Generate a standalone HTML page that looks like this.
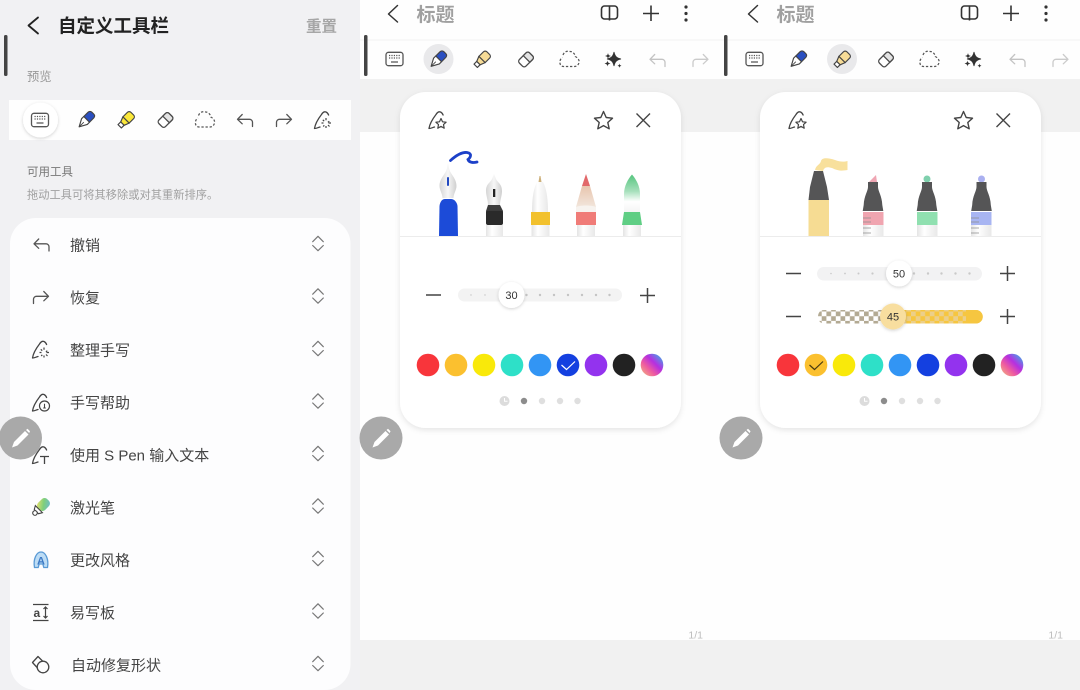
<!DOCTYPE html>
<html lang="zh"><head><meta charset="utf-8"><title>自定义工具栏</title>
<style>
html,body{margin:0;padding:0;background:#fff}
svg{display:block;font-family:"Liberation Sans","Noto Sans CJK SC",sans-serif;filter:blur(.3px)}
</style></head><body>
<svg width="1080" height="690" viewBox="0 0 1080 690" xmlns="http://www.w3.org/2000/svg">
<defs>
<filter id="sh" x="-20%" y="-20%" width="140%" height="140%"><feDropShadow dx="0" dy="2" stdDeviation="3" flood-color="#000" flood-opacity=".1"/></filter>
<filter id="sh2" x="-40%" y="-40%" width="180%" height="180%"><feDropShadow dx="0" dy="1" stdDeviation="1.5" flood-color="#000" flood-opacity=".18"/></filter>
<filter id="b"><feGaussianBlur stdDeviation=".35"/></filter>
<linearGradient id="silver" x1="0" y1="0" x2="1" y2="0"><stop offset="0" stop-color="#d5d5d5"/><stop offset=".5" stop-color="#f7f7f7"/><stop offset="1" stop-color="#cfcfcf"/></linearGradient>
<linearGradient id="whitebar" x1="0" y1="0" x2="1" y2="0"><stop offset="0" stop-color="#e4e4e4"/><stop offset=".35" stop-color="#fff"/><stop offset="1" stop-color="#e8e8e8"/></linearGradient>
<linearGradient id="greenf" x1="0" y1="0" x2="0" y2="1"><stop offset="0" stop-color="#55c57e"/><stop offset=".45" stop-color="#a7e0bc"/><stop offset=".72" stop-color="#fff"/><stop offset="1" stop-color="#f4f4f4"/></linearGradient>
<linearGradient id="wood" x1="0" y1="0" x2="0" y2="1"><stop offset="0" stop-color="#e8c5ae"/><stop offset="1" stop-color="#f2e6dc"/></linearGradient>
<linearGradient id="laser" x1="0" y1="1" x2="1" y2="0"><stop offset="0" stop-color="#f3e36a"/><stop offset=".5" stop-color="#7fcf7a"/><stop offset="1" stop-color="#6cb8d8"/></linearGradient>
<linearGradient id="rainbow2" x1="0" y1="1" x2="1" y2="0"><stop offset="0" stop-color="#f3c17a"/><stop offset=".35" stop-color="#ee5aa0"/><stop offset=".6" stop-color="#b62fe0"/><stop offset=".85" stop-color="#5a8fe6"/><stop offset="1" stop-color="#3fd6c8"/></linearGradient>
<pattern id="chk" width="9.4" height="9.4" patternUnits="userSpaceOnUse" x="817" y="311.5"><rect width="9.4" height="9.4" fill="#fff"/><rect width="4.7" height="4.7" fill="#b3aa93"/><rect x="4.7" y="4.7" width="4.7" height="4.7" fill="#b3aa93"/></pattern>
<pattern id="chk2" width="9.4" height="9.4" patternUnits="userSpaceOnUse" x="817" y="311.5"><rect width="9.4" height="9.4" fill="#f6c640"/><rect width="4.7" height="4.7" fill="#eccf8a"/><rect x="4.7" y="4.7" width="4.7" height="4.7" fill="#eccf8a"/></pattern>

<g id="kb" fill="none" stroke="#555" stroke-width="1.3"><rect x="-8.5" y="-6.7" width="17" height="13.4" rx="2.5"/><path d="M-5.5-3.5h1.2m1.2 0h1.2m1.2 0h1.2m1.2 0h1.2m1.2 0h1.2M-5.5-1h1.2m1.2 0h1.2m1.2 0h1.2m1.2 0h1.2m1.2 0h1.2M-3.5 3h7" stroke-width="1.2"/></g>
<g id="penc"><g transform="rotate(45) scale(.88)" stroke="#444" stroke-width="1.3" stroke-linejoin="round"><path d="M-4.6-1V-8a3 3 0 0 1 3-3H1.6a3 3 0 0 1 3 3V-1Z" fill="#2a4fc0"/><path d="M-4.6-1V2.5L0 11 4.6 2.5V-1Z" fill="#fff"/><path d="M0 3.5V11" stroke-width="1"/></g></g>
<g id="penh"><g transform="rotate(45) scale(.85)" stroke="#444" stroke-width="1.4" stroke-linejoin="round"><path d="M-5.2 0V-7.5a3 3 0 0 1 3-3H2.2a3 3 0 0 1 3 3V0Z" fill="#fbe83a"/><path d="M-5.2 0-2.8 6H2.8L5.2 0Z" fill="#fbe83a"/><path d="M-2.8 6V10.5H2.800V6Z" fill="#fff"/></g></g>
<g id="penh2"><g transform="rotate(45) scale(.85)" stroke="#444" stroke-width="1.4" stroke-linejoin="round"><path d="M-5.2 0V-7.5a3 3 0 0 1 3-3H2.2a3 3 0 0 1 3 3V0Z" fill="#f7dc97"/><path d="M-5.2 0-2.8 6H2.8L5.2 0Z" fill="#f7dc97"/><path d="M-2.8 6V10.5H2.800V6Z" fill="#fff"/></g></g>
<g id="eraser"><g transform="rotate(45) scale(.8)" stroke="#4a4a4a" stroke-width="1.6"><rect x="-5.8" y="-9" width="11.6" height="18" rx="3.2" fill="#fff"/><path d="M-5.8-1V-5.8a3.2 3.2 0 0 1 3.2-3.2H2.6a3.2 3.2 0 0 1 3.2 3.2V-1Z" fill="#e3e3e3"/></g></g>
<path id="lasso" d="M-6.500-4.500C-5-8.500-1.500-8.500 0-8 3-8.500 5.500-5.500 5.800-3 8.500-1.500 10 .5 9.500 3 9 5.500 7 7 5 7H-6C-9 7-10 4-9.500 1.500-9 -.5-8-1.500-7-2" fill="none" stroke="#555" stroke-width="1.250" stroke-dasharray="2.300 1.800"/>
<path id="undo" d="M7.500 6.500V2.300A3 3 0 0 0 4.500-.7H-7M-2.800-5.500-7.500-.7-2.800 3.800" fill="none" stroke="#555" stroke-width="1.300" stroke-linecap="round" stroke-linejoin="round"/>
<path id="redo" d="M-7.500 6.500V2.300A3 3 0 0 1-4.500-.7H7M2.800-5.500 7.500-.7 2.800 3.800" fill="none" stroke="#555" stroke-width="1.300" stroke-linecap="round" stroke-linejoin="round"/>
<path id="penout" d="M-8.500 8.500C-8 5-6.500 1-1.500-5.500-.3-7.500 1.500-8.500 3-8 4-7.600 5-6.500 5.600-5M-8.500 8.500C-6.500 8.500-5 7.500-3 7" fill="none" stroke="#444" stroke-width="1.300" stroke-linecap="round"/>
<g id="tidy"><use href="#penout"/><path d="M3-2V.2M3 6V8M-1.500 3H.5M5.500 3H8M-.2-.2 1.200 1.200M6.300 1.200 4.900 2.300M.2 6.500 1.300 5.300M5 5 6.500 6.500" stroke="#444" stroke-width="1.200" fill="none"/></g>
<g id="help"><use href="#penout"/><circle cx="3.500" cy="3.500" r="5" fill="#fff" stroke="#444" stroke-width="1.200"/><path d="M3.500 1.200V5.500M2.200 5.500H4.800" stroke="#444" stroke-width="1.100" fill="none"/></g>
<g id="spen"><use href="#penout"/><path d="M-1 1.500H8M3.500 1.500V9" stroke="#444" stroke-width="1.300" fill="none"/></g>
<g id="pstar"><use href="#penout"/><path d="M3.500-1.500 5 1.800 8.600 2.200 6 4.600 6.700 8.200 3.500 6.400 .3 8.200 1 4.600-1.600 2.200 2 1.800Z" fill="#fff" stroke="#444" stroke-width="1.200" stroke-linejoin="round"/></g>
<g id="chev" fill="none" stroke="#777" stroke-width="1.200" stroke-linecap="round" stroke-linejoin="round"><path d="M-5.300-1.800 0-7.200 5.300-1.800M-5.300 2 0 7.200 5.300 2"/></g>
<g id="fab"><circle r="21.500" fill="#a9a9a9"/><path d="M-8.500 9.500-6.500 4 4.500-7 8-3.500-3 7.500Z" fill="#fff"/><path d="M5.500-8 7-9.300 9.500-6.800 8.700-5Z" fill="#fff"/></g>
<g id="spark" fill="#333"><path d="M1-7.500C2-3 3.500-1.500 8-.5 3.500.5 2 2 1 6.500 0 2-1.500.5-6-.5-1.500-1.500 0-3 1-7.500Z" stroke="#333" stroke-width=".8"/><path d="M-5-6.500C-4.600-4.500-4.200-4.100-2-3.500-4.200-2.900-4.600-2.500-5-.5-5.400-2.500-5.800-2.900-8-3.500-5.800-4.100-5.400-4.500-5-6.500Z"/><path d="M-5.500 1C-5.100 3-4.700 3.400-2.500 4-4.700 4.600-5.100 5-5.500 7-5.900 5-6.300 4.600-8.500 4-6.300 3.400-5.900 3-5.500 1Z"/><path d="M6.500 4C6.800 5.500 7 5.700 8.500 6.200 7 6.700 6.800 7 6.500 8.500 6.200 7 6 6.700 4.500 6.200 6 5.700 6.200 5.500 6.500 4Z"/></g>
<g id="palette"><circle cx="428" cy="365" r="11.300" fill="#f8353b"/><circle cx="456" cy="365" r="11.300" fill="#fbc02f"/><circle cx="484" cy="365" r="11.300" fill="#f9e90a"/><circle cx="512" cy="365" r="11.300" fill="#2ee0c8"/><circle cx="540" cy="365" r="11.300" fill="#3295f4"/><circle cx="568" cy="365" r="11.300" fill="#1440e0"/><circle cx="596" cy="365" r="11.300" fill="#9333ee"/><circle cx="624" cy="365" r="11.300" fill="#222"/><circle cx="652" cy="365" r="11.300" fill="url(#rainbow2)"/></g>
<g id="pager"><circle cx="504.500" cy="401" r="5" fill="#dcdcdc"/><path d="M504.500 398V401.300H507.500" stroke="#fff" stroke-width="1" fill="none"/><circle cx="524" cy="401" r="3.200" fill="#8c8c8c"/><circle cx="542" cy="401" r="3.200" fill="#dfdfdf"/><circle cx="560" cy="401" r="3.200" fill="#dfdfdf"/><circle cx="577.500" cy="401" r="3.200" fill="#dfdfdf"/></g>
<g id="cap"><path d="M-5-29H5V-24C5-20 9-15 9.300-6L10.300 0H-10.300L-9.300-6C-9-15-5-20-5-24Z" fill="#545456"/></g>
</defs>

<!-- LEFT PANEL -->
<rect width="360" height="690" fill="#f1f1f3"/>
<path d="M38 17.500 28.500 25.500 38 33.500" fill="none" stroke="#222" stroke-width="1.800" stroke-linecap="round" stroke-linejoin="round"/>
<text x="58" y="32.500" font-size="18.500" font-weight="700" fill="#222">自定义工具栏</text>
<text x="306" y="31.500" font-size="15.500" font-weight="700" fill="#a6a6a6">重置</text>
<rect x="4" y="35" width="3.500" height="41" rx="1.500" fill="#444"/>
<text x="27" y="81" font-size="12.300" fill="#999">预览</text>
<rect x="9" y="100" width="342" height="40" fill="#fefefe"/>
<circle cx="40.500" cy="120" r="17.500" fill="#fff" filter="url(#sh2)"/>
<use href="#kb" x="40" y="120"/><use href="#penc" x="86" y="120"/><use href="#penh" x="126" y="120"/><use href="#eraser" x="165.500" y="120"/><use href="#lasso" x="205" y="120"/><use href="#undo" x="245" y="120"/><use href="#redo" x="284" y="120"/><use href="#tidy" x="323" y="120"/>
<text x="27" y="175.500" font-size="11.500" fill="#777">可用工具</text>
<text x="27" y="198.500" font-size="11.250" fill="#a0a0a0">拖动工具可将其移除或对其重新排序。</text>
<rect x="10" y="218" width="340.500" height="472" rx="26" fill="#fdfdfe"/>
<g font-size="15" fill="#444">
<text x="70" y="250.500">撤销</text><text x="70" y="303">恢复</text><text x="70" y="355.500">整理手写</text><text x="70" y="408">手写帮助</text><text x="70" y="460.500">使用 S Pen 输入文本</text><text x="70" y="513">激光笔</text><text x="70" y="565.500">更改风格</text><text x="70" y="618">易写板</text><text x="71" y="670.500">自动修复形状</text>
</g>
<use href="#chev" x="318" y="243.500"/><use href="#chev" x="318" y="296"/><use href="#chev" x="318" y="348.500"/><use href="#chev" x="318" y="401"/><use href="#chev" x="318" y="453.500"/><use href="#chev" x="318" y="506"/><use href="#chev" x="318" y="558.500"/><use href="#chev" x="318" y="611"/><use href="#chev" x="318" y="663.500"/>
<use href="#undo" x="41.500" y="244.500"/><use href="#redo" x="41" y="297"/><use href="#tidy" x="41" y="349.500"/><use href="#help" x="41" y="402.500"/><use href="#spen" x="41" y="455"/>
<g transform="translate(41,507) rotate(45)" stroke="#444" stroke-width="1.100"><rect x="-5" y="-10" width="10" height="13" rx="4" fill="url(#laser)" stroke="none"/><path d="M-5 3-3 6.500H3L5 3Z" fill="#fff"/><circle cy="8.500" r="2.300" fill="#fff"/></g>
<g transform="translate(41,560)"><path d="M-6.500 7.500C-8-1-4.500-8 0-8S8-1 6.500 7.500H2.800L1.800 4H-1.800L-2.800 7.500Z" fill="#bcdcf5" stroke="#5a9ad5" stroke-width="1.300"/><text x="0" y="4.500" text-anchor="middle" font-size="11" font-weight="700" fill="#3c78c4">A</text></g>
<g transform="translate(41,612.500)" stroke="#444" fill="none" stroke-width="1.200"><path d="M-8-8H7.500M-8 8H7.500"/><text x="-7.500" y="4.500" font-size="12" font-weight="700" fill="#444" stroke="none">a</text><path d="M4.500-5V5M2.500-3.500 4.500-5.500 6.500-3.500M2.500 3.500 4.500 5.500 6.500 3.500"/></g>
<g transform="translate(41,664.500)" stroke="#444" fill="none" stroke-width="1.300"><path d="M-3-8 3-2-3 4-8.500-2Z" stroke-linejoin="round"/><circle cx="2" cy="2.500" r="5.800" fill="#fdfdfe"/></g>
<use href="#fab" x="20.500" y="438"/>

<!-- MIDDLE -->
<rect x="360" width="360" height="690" fill="#f1f1f1"/>
<rect x="360" width="360" height="79" fill="#fefefe"/>
<rect x="360" y="39.500" width="360" height="1" fill="#f2f2f2"/>
<rect x="360" y="132" width="360" height="508" fill="#fefefe"/>
<path d="M397.500 5.500 388.500 14 397.500 22" fill="none" stroke="#333" stroke-width="1.500" stroke-linecap="round" stroke-linejoin="round"/>
<text x="416.500" y="21" font-size="19" font-weight="700" fill="#a0a0a0">标题</text>
<g fill="none" stroke="#333" stroke-width="1.600"><rect x="601.500" y="6" width="16" height="13" rx="3"/><path d="M609.500 6V20.500M643 13.500H659M651 5.500V21"/></g>
<circle cx="686" cy="7" r="1.600" fill="#333"/><circle cx="686" cy="13.500" r="1.600" fill="#333"/><circle cx="686" cy="20" r="1.600" fill="#333"/>
<rect x="364" y="35" width="3.500" height="41" rx="1.500" fill="#444"/>
<circle cx="438.500" cy="59" r="15" fill="#e9e9eb"/>
<use href="#kb" x="394.500" y="59"/><use href="#penc" x="438" y="59.500"/><use href="#penh2" x="482" y="59.500"/><use href="#eraser" x="526" y="59.500"/><use href="#lasso" x="569.500" y="59.500"/><use href="#spark" x="613" y="59.500"/>
<use href="#undo" x="657.500" y="60" opacity=".35"/><use href="#redo" x="700.500" y="60" opacity=".3"/>
<rect x="400" y="92" width="281" height="336" rx="26" fill="#fff" filter="url(#sh)"/>
<use href="#pstar" x="437.500" y="120"/>
<path d="M603.500 111.500 606.200 117.500 612.500 118.200 607.800 122.500 609.200 128.800 603.500 125.600 597.800 128.800 599.200 122.500 594.500 118.200 600.800 117.500Z" fill="none" stroke="#444" stroke-width="1.400" stroke-linejoin="round"/>
<path d="M636.500 113.500 650 127M650 113.500 636.500 127" stroke="#444" stroke-width="1.400" fill="none"/>
<rect x="400" y="236" width="281" height="1" fill="#ececec"/>
<g filter="url(#b)">
<path d="M450.500 160.500C456 155.500 462 152 467 152.500 473 153.500 470 158 468 159.500 469 162.500 473 163 477 162" fill="none" stroke="#1a40c8" stroke-width="2.800" stroke-linecap="round"/>
<path d="M448 163 449 168C450 174 456.500 178 456.500 186 456.500 190 453.500 194 453.500 198H442.500C442.500 194 439.500 190 439.500 186 439.500 178 446 174 447 168Z" fill="url(#silver)"/>
<rect x="447" y="177" width="2" height="9" rx="1" fill="#2448c0"/>
<path d="M439 236 439.500 206C440 202 442 199 445 199H451C454 199 457 202 457.500 206L458 236Z" fill="#1d4bd8"/>
<path d="M494 174 496 179C498 183 502 184 502 191 502 196 500 200 500 205H488C488 200 486 196 486 191 486 184 490 183 492 179Z" fill="url(#silver)"/>
<rect x="493" y="189" width="2.300" height="8" fill="#222"/>
<rect x="486" y="210" width="17" height="15" rx="2" fill="#2a2a2a"/><path d="M488 205H500L503 211H486Z" fill="#3a3a3a"/>
<rect x="486" y="225" width="17" height="11" fill="url(#whitebar)"/>
<path d="M538.500 182 539.500 176H540.500L541.500 182Z" fill="#cdb07a"/>
<path d="M537 182H543C545 186 548 193 548 212H532C532 193 535 186 537 182Z" fill="url(#whitebar)"/>
<rect x="531" y="212" width="19" height="13" fill="#f2c12e"/>
<rect x="531.500" y="225" width="18" height="11" fill="url(#whitebar)"/>
<path d="M586 174 590 186H582Z" fill="#e2686a"/>
<path d="M582 186H590L596 207H576Z" fill="url(#wood)"/>
<path d="M576 207C580 205 592 205 596 207V212H576Z" fill="#f7f3ef"/>
<rect x="576" y="212" width="20" height="13" fill="#f07c78"/>
<rect x="577" y="225" width="18" height="11" fill="url(#whitebar)"/>
<path d="M632 174.500C636 179 640 186 640 194 640 200 640 206 640 212H624C624 206 624 200 624 194 624 186 628 179 632 174.500Z" fill="url(#greenf)"/>
<path d="M624 212H640L642 225H622Z" fill="#5fce84"/>
<rect x="623" y="225" width="18" height="11" fill="url(#whitebar)"/>
</g>
<path d="M426 295H441M640 295.500H655M647.500 288V303" stroke="#444" stroke-width="1.500" fill="none"/>
<rect x="458" y="288.500" width="164" height="13" rx="6.500" fill="#f3f3f3"/>
<g fill="#c4c4c4"><circle cx="471" cy="295" r=".7"/><circle cx="485" cy="295" r=".7"/><circle cx="526.500" cy="295" r="1.200"/><circle cx="540" cy="295" r="1.200"/><circle cx="554" cy="295" r="1.200"/><circle cx="568" cy="295" r="1.200"/><circle cx="582" cy="295" r="1.200"/><circle cx="596" cy="295" r="1.200"/><circle cx="609.500" cy="295" r="1.200"/></g>
<circle cx="511.500" cy="295" r="13" fill="#fff" filter="url(#sh2)"/>
<text x="511.500" y="299" font-size="11" text-anchor="middle" fill="#333">30</text>
<use href="#palette"/>
<path d="M561.500 365 566.500 369.500 575 361.500" fill="none" stroke="#fff" stroke-width="1.200"/>
<use href="#pager"/>
<use href="#fab" x="381" y="438"/>
<text x="703" y="638.500" font-size="10.500" text-anchor="end" fill="#bdbdbd">1/1</text>

<!-- RIGHT -->
<rect x="720" width="360" height="690" fill="#f1f1f1"/>
<rect x="720" width="360" height="79" fill="#fefefe"/>
<rect x="720" y="39.500" width="360" height="1" fill="#f2f2f2"/>
<rect x="720" y="132" width="360" height="508" fill="#fefefe"/>
<path d="M757.500 5.500 748.500 14 757.500 22" fill="none" stroke="#333" stroke-width="1.500" stroke-linecap="round" stroke-linejoin="round"/>
<text x="776.500" y="21" font-size="19" font-weight="700" fill="#a0a0a0">标题</text>
<g fill="none" stroke="#333" stroke-width="1.600"><rect x="961.500" y="6" width="16" height="13" rx="3"/><path d="M969.500 6V20.500M1003 13.500H1019M1011 5.500V21"/></g>
<circle cx="1046" cy="7" r="1.600" fill="#333"/><circle cx="1046" cy="13.500" r="1.600" fill="#333"/><circle cx="1046" cy="20" r="1.600" fill="#333"/>
<rect x="724" y="35" width="3.500" height="41" rx="1.500" fill="#444"/>
<circle cx="842" cy="59" r="15" fill="#e9e9eb"/>
<use href="#kb" x="754.500" y="59"/><use href="#penc" x="798" y="59.500"/><use href="#penh2" x="842" y="59.500"/><use href="#eraser" x="886" y="59.500"/><use href="#lasso" x="929.500" y="59.500"/><use href="#spark" x="973" y="59.500"/>
<use href="#undo" x="1017.500" y="60" opacity=".35"/><use href="#redo" x="1060.500" y="60" opacity=".3"/>
<rect x="760" y="92" width="281" height="336" rx="26" fill="#fff" filter="url(#sh)"/>
<use href="#pstar" x="797.500" y="120"/>
<path d="M963.500 111.500 966.200 117.500 972.500 118.200 967.800 122.500 969.200 128.800 963.500 125.600 957.800 128.800 959.200 122.500 954.500 118.200 960.800 117.500Z" fill="none" stroke="#444" stroke-width="1.400" stroke-linejoin="round"/>
<path d="M996.500 113.500 1010 127M1010 113.500 996.500 127" stroke="#444" stroke-width="1.400" fill="none"/>
<rect x="760" y="236" width="281" height="1" fill="#ececec"/>
<g filter="url(#b)">
<path d="M815 170C816 165 820 165 821 161 822 157 829 158 835 160 840 162 844 162 847.500 161V170C842 171 838 171 832 168 826 166 824 168 823 171Z" fill="#f8e09c"/>
<path d="M814 171H823L827 187 829 200H808.500L810 187Z" fill="#545456"/>
<rect x="808.500" y="200" width="20.500" height="36" fill="#f6dc93"/>
<path d="M869 182 876 175 877 182Z" fill="#efa6b3"/><use href="#cap" x="873" y="211"/><rect x="863" y="212" width="20.500" height="13" fill="#f0a5b0"/><rect x="863" y="225" width="20.500" height="11" fill="url(#whitebar)"/>
<circle cx="927" cy="179" r="3.500" fill="#7fd0ad"/><use href="#cap" x="927" y="211"/><rect x="917" y="212" width="20.500" height="13" fill="#90e0b0"/><rect x="917" y="225" width="20.500" height="11" fill="url(#whitebar)"/>
<circle cx="981.500" cy="179" r="3.500" fill="#aab0f0"/><use href="#cap" x="981.500" y="211"/><rect x="971" y="212" width="20.500" height="13" fill="#a8b5f2"/><rect x="971" y="225" width="20.500" height="11" fill="url(#whitebar)"/>
<path d="M863 218H871M863 222H871M863 228H871M863 233H871M971 218H979M971 222H979M971 228H979M971 233H979" stroke="#8d8d8d" stroke-width=".8"/>
</g>
<path d="M786 273.500H801M1000 273.500H1015M1007.500 266V281M786 316.500H801M1000 316.500H1015M1007.500 309V324" stroke="#444" stroke-width="1.500" fill="none"/>
<rect x="817" y="267" width="165" height="13.500" rx="6.700" fill="#f2f2f3"/>
<g fill="#c9c9c9"><circle cx="831" cy="273.500" r=".8"/><circle cx="845" cy="273.500" r=".9"/><circle cx="858.500" cy="273.500" r="1"/><circle cx="872.500" cy="273.500" r="1.100"/><circle cx="914" cy="273.500" r="1.200"/><circle cx="928" cy="273.500" r="1.200"/><circle cx="941.500" cy="273.500" r="1.200"/><circle cx="955.500" cy="273.500" r="1.200"/><circle cx="969.500" cy="273.500" r="1.200"/></g>
<circle cx="899" cy="273.500" r="13" fill="#fff" filter="url(#sh2)"/>
<text x="899" y="277.500" font-size="11" text-anchor="middle" fill="#333">50</text>
<path d="M824 310H893V323.500H824C820 323.500 818 320 818 316.700 818 313 820 310 824 310Z" fill="url(#chk)"/>
<path d="M893 310H976A6.700 6.700 0 0 1 976 323.500H893Z" fill="url(#chk2)"/>
<path d="M966 310H976A6.700 6.700 0 0 1 976 323.500H966Z" fill="#f6c640"/>
<circle cx="893" cy="316.500" r="13" fill="#f8de9f" filter="url(#sh2)"/>
<text x="893" y="320.500" font-size="11" text-anchor="middle" fill="#333">45</text>
<use href="#palette" x="360"/>
<path d="M809.500 365 814.500 369.500 823 361.500" fill="none" stroke="#4a3a10" stroke-width="1.200"/>
<use href="#pager" x="360"/>
<use href="#fab" x="741" y="438"/>
<text x="1063" y="638.500" font-size="10.500" text-anchor="end" fill="#bdbdbd">1/1</text>
</svg>
</body></html>
